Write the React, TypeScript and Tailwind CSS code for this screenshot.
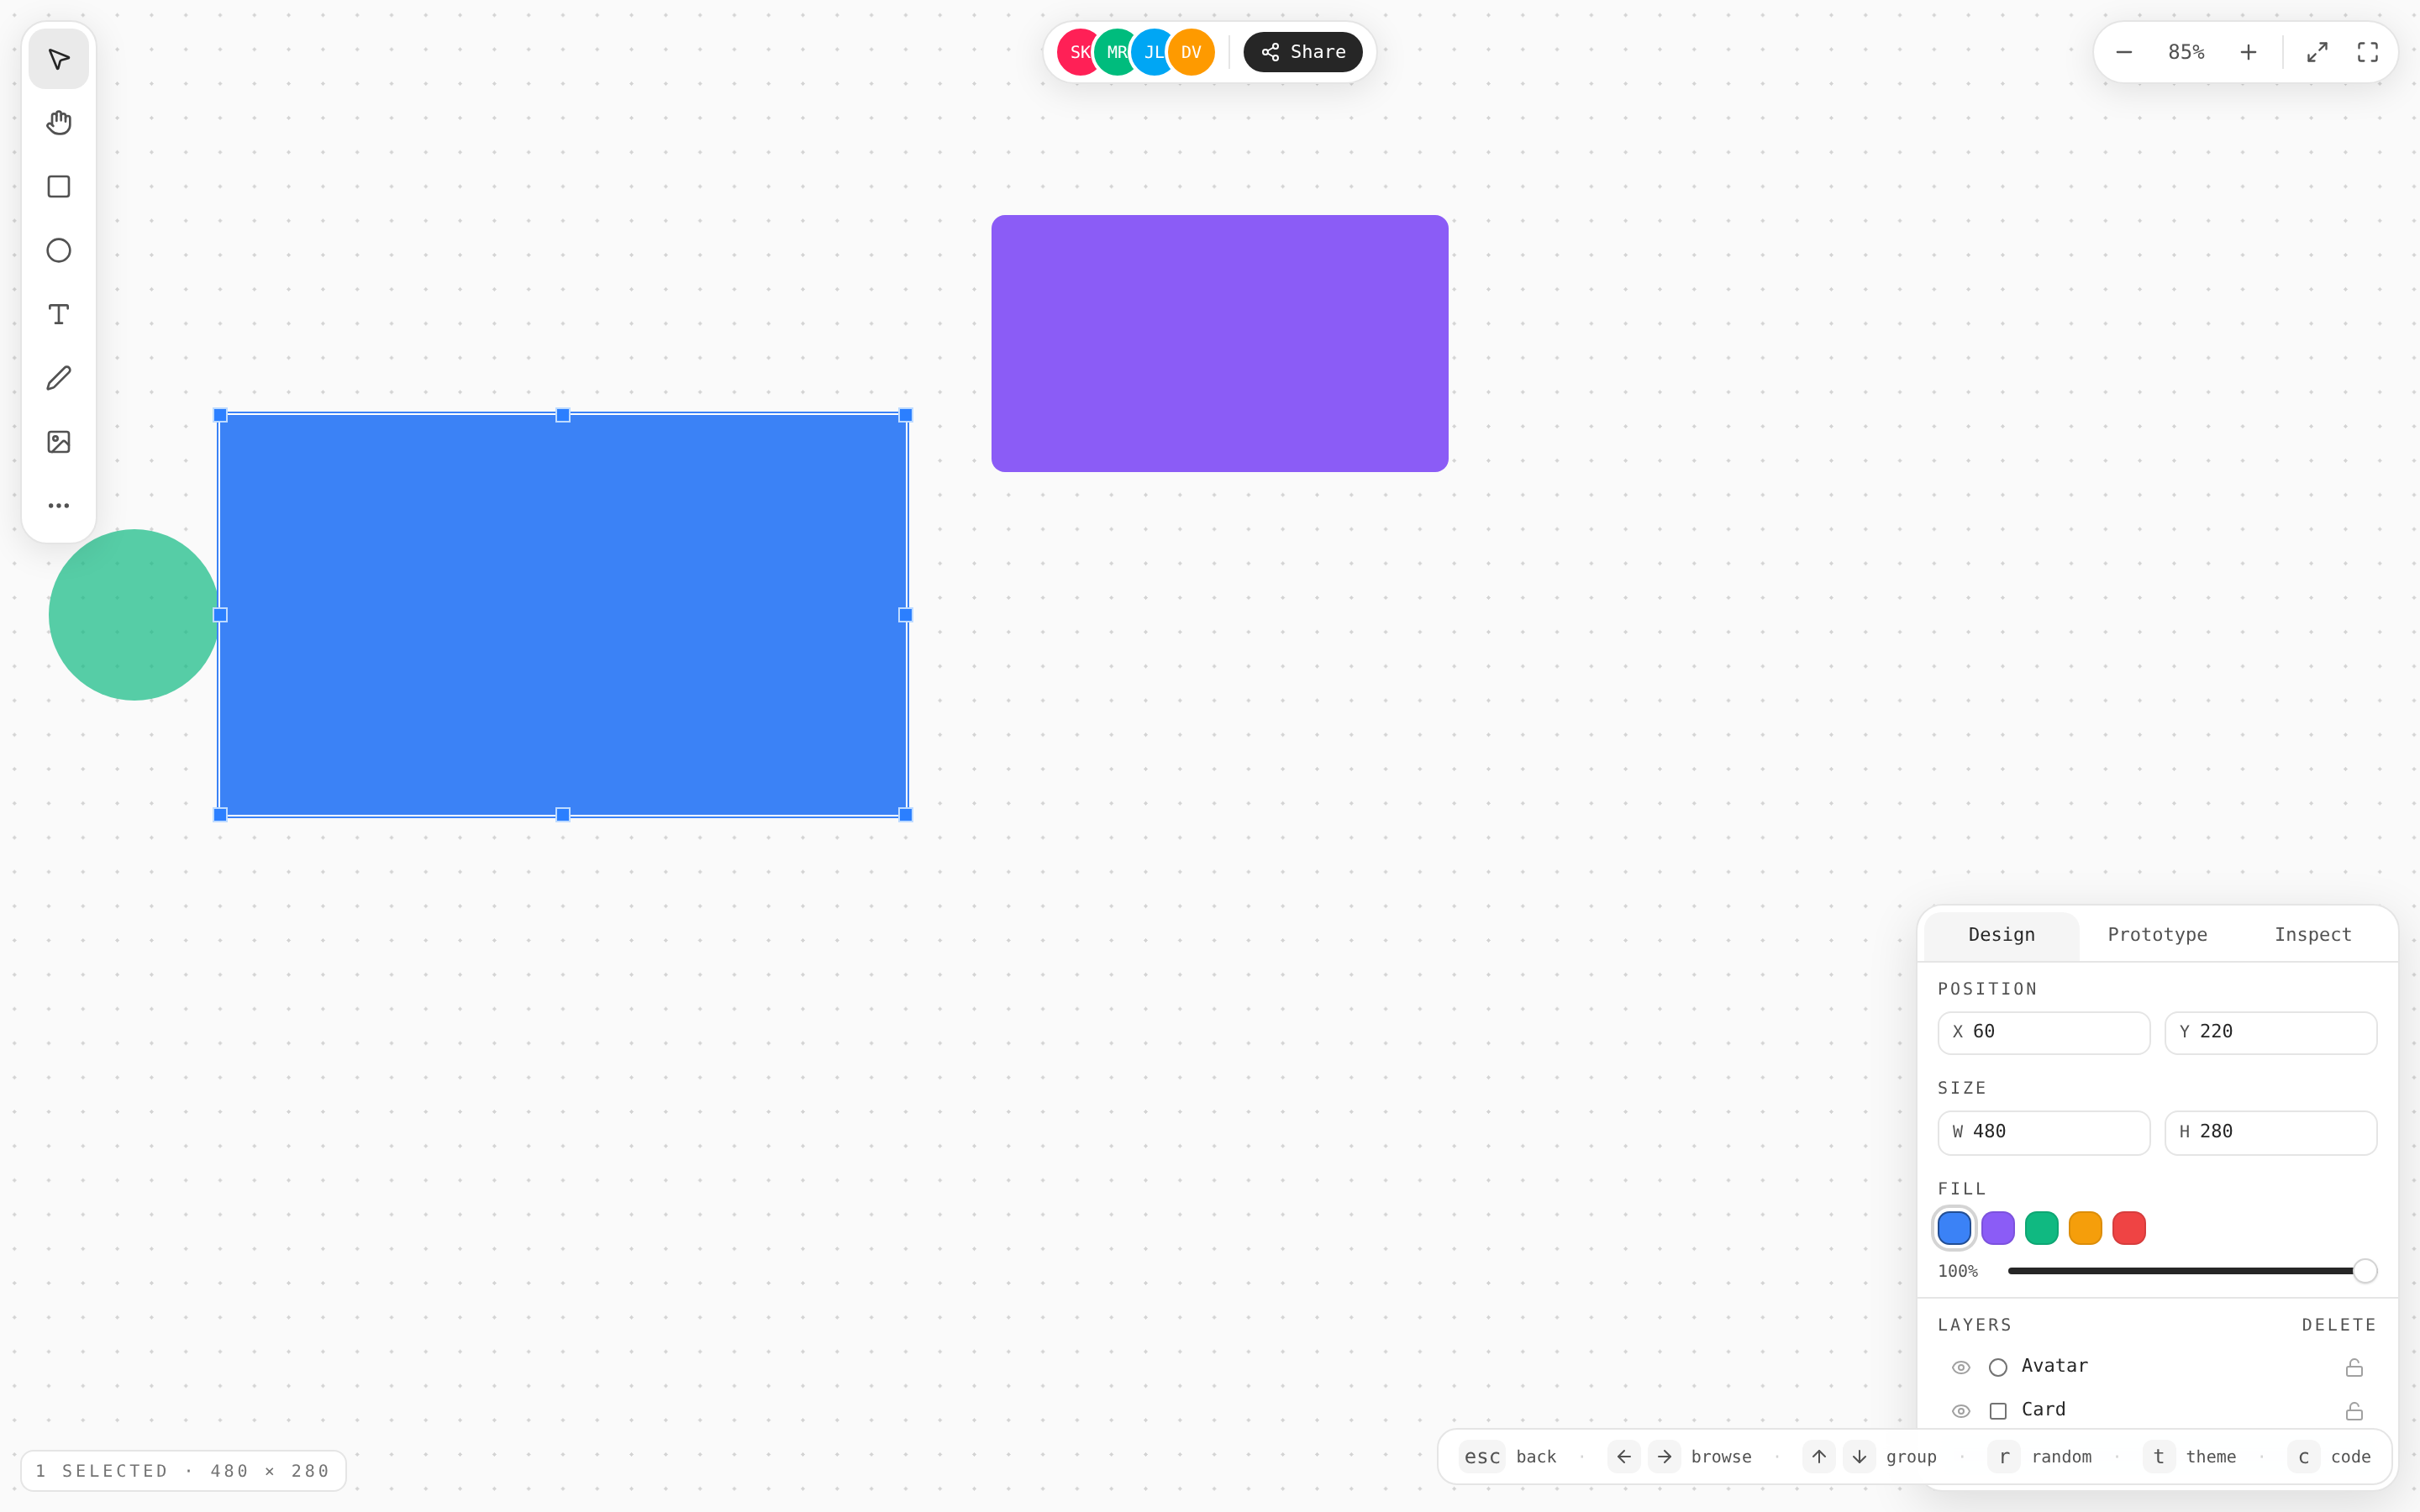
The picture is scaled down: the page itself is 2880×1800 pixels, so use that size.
import React from 'react';
import {
  ArrowDown,
  ArrowLeft,
  ArrowRight,
  ArrowUp,
  Circle,
  Ellipsis,
  Eye,
  Hand,
  Image,
  LockOpen,
  Maximize,
  Maximize2,
  Minus,
  MousePointer2,
  Pen,
  Plus,
  Share2,
  Square,
  Type,
} from 'lucide-react';

const tools = [MousePointer2, Hand, Square, Circle, Type, Pen, Image, Ellipsis];

const avatars = [
  { label: 'SK', color: 'bg-rose-500' },
  { label: 'MR', color: 'bg-emerald-500' },
  { label: 'JL', color: 'bg-sky-500' },
  { label: 'DV', color: 'bg-amber-500' },
];

const swatches = ['bg-[#8b5cf6]', 'bg-[#10b981]', 'bg-[#f59e0b]', 'bg-[#ef4444]'];

const Handle = ({ className }: { className: string }) => (
  <div className={`absolute w-[18px] h-[18px] -ml-[9px] -mt-[9px] bg-blue-500 border-2 border-blue-200 ${className}`} />
);

const Field = ({ label, value, height }: { label: string; value: string; height: string }) => (
  <div className={`flex items-center gap-3 px-4 pb-1 border-2 border-neutral-200 rounded-2xl ${height}`}>
    <span className="text-[20px] text-neutral-600">{label}</span>
    <span className="text-[22px] text-neutral-800">{value}</span>
  </div>
);

const Label = ({ children }: { children: React.ReactNode }) => (
  <div className="text-[20px] leading-[30px] tracking-[3px] text-neutral-600">{children}</div>
);

const LayerRow = ({ name, shape: Shape }: { name: string; shape: typeof Circle }) => (
  <div className="flex items-center h-12 px-4 text-neutral-500">
    <Eye size={24} className="text-neutral-400" />
    <Shape size={24} className="ml-5" />
    <span className="ml-4 pb-1 text-[22px] text-neutral-800">{name}</span>
    <LockOpen size={24} className="ml-auto text-neutral-400" />
  </div>
);

const Key = ({ children, wide }: { children: React.ReactNode; wide?: boolean }) => (
  <span className={`flex items-center justify-center h-10 rounded-xl bg-neutral-100 text-[24px] text-neutral-600 ${wide ? 'w-14' : 'w-10'}`}>
    {children}
  </span>
);

const Sep = () => <span className="text-neutral-300">·</span>;

export default function App() {
  return (
    <div className="relative w-full h-screen overflow-hidden bg-[#fafafa] bg-[radial-gradient(circle,#d4d4d4_2px,transparent_2px)] bg-[size:40.8px_40.8px] bg-[position:160px_120px] font-['DejaVu_Sans_Mono',monospace] [text-rendering:geometricPrecision]">
      {/* Canvas shapes */}
      <div className="absolute left-[58px] top-[630px] w-[204px] h-[204px] rounded-full bg-[#10b981] opacity-70" />
      <div className="absolute left-[1180px] top-[256px] w-[544px] h-[306px] rounded-2xl bg-[#8b5cf6]" />
      <div className="absolute left-[262px] top-[494px] w-[816px] h-[476px] bg-[#3b82f6] shadow-[0_0_0_2px_#fff,0_0_0_4px_#3b82f6]">
        <Handle className="left-0 top-0" />
        <Handle className="left-1/2 top-0" />
        <Handle className="left-full top-0" />
        <Handle className="left-0 top-1/2" />
        <Handle className="left-full top-1/2" />
        <Handle className="left-0 top-full" />
        <Handle className="left-1/2 top-full" />
        <Handle className="left-full top-full" />
      </div>

      {/* Tool rail */}
      <div className="absolute left-6 top-6 flex flex-col gap-1 p-2 bg-white border-2 border-neutral-200 rounded-[32px] shadow-[0_8px_40px_rgba(0,0,0,0.1)]">
        {tools.map((Icon, i) => (
          <button
            key={i}
            className={`flex items-center justify-center w-[72px] h-[72px] rounded-[20px] ${
              i === 0 ? 'bg-neutral-200/80 text-neutral-800' : 'text-neutral-600'
            }`}
          >
            <Icon size={32} />
          </button>
        ))}
      </div>

      {/* Collaborators */}
      <div className="absolute left-[1240px] top-6 flex items-center h-[76px] pl-3 pr-4 bg-white border-2 border-neutral-200 rounded-full shadow-[0_8px_40px_rgba(0,0,0,0.1)] will-change-transform">
        <div className="flex">
          {avatars.map((a, i) => (
            <div
              key={a.label}
              className={`flex items-center justify-center w-16 h-16 rounded-full border-4 border-white text-[20px] text-white ${a.color} ${i > 0 ? '-ml-5' : ''}`}
            >
              {a.label}
            </div>
          ))}
        </div>
        <div className="w-0.5 h-10 ml-3 bg-neutral-200" />
        <button className="flex items-center gap-3 h-12 ml-4 px-5 rounded-full bg-neutral-800 text-white text-[22px]">
          <Share2 size={24} />
          <span className="pb-0.5">Share</span>
        </button>
      </div>

      {/* Zoom controls */}
      <div className="absolute right-6 top-6 flex items-center h-[76px] px-2 bg-white border-2 border-neutral-200 rounded-full shadow-[0_8px_40px_rgba(0,0,0,0.1)] text-neutral-600 will-change-transform">
        <button className="flex items-center justify-center w-14 h-14"><Minus size={28} /></button>
        <span className="w-[92px] text-center text-[24px]">85%</span>
        <button className="flex items-center justify-center w-14 h-14"><Plus size={28} /></button>
        <div className="w-0.5 h-10 mx-3 bg-neutral-200" />
        <button className="flex items-center justify-center w-14 h-14"><Maximize2 size={28} /></button>
        <button className="flex items-center justify-center w-14 h-14 ml-1"><Maximize size={28} /></button>
      </div>

      {/* Properties panel */}
      <div className="absolute right-6 bottom-6 flex flex-col w-[576px] h-[700px] overflow-hidden bg-white border-2 border-neutral-200 rounded-[32px] shadow-[0_16px_60px_rgba(0,0,0,0.12)] will-change-transform">
        <div className="grid grid-cols-3 px-2 pt-2 border-b-2 border-neutral-200 text-[22px] text-neutral-600">
          <div className="flex items-center justify-center h-[58px] pb-1 rounded-t-[20px] bg-neutral-100 text-neutral-800">Design</div>
          <div className="flex items-center justify-center h-[58px] pb-1">Prototype</div>
          <div className="flex items-center justify-center h-[58px] pb-1">Inspect</div>
        </div>

        <div className="px-6 pt-4 pb-4 border-b-2 border-neutral-200">
          <Label>POSITION</Label>
          <div className="grid grid-cols-2 gap-4 mt-3">
            <Field label="X" value="60" height="h-[52px]" />
            <Field label="Y" value="220" height="h-[52px]" />
          </div>
          <div className="mt-6"><Label>SIZE</Label></div>
          <div className="grid grid-cols-2 gap-4 mt-3">
            <Field label="W" value="480" height="h-[54px]" />
            <Field label="H" value="280" height="h-[54px]" />
          </div>
          <div className="mt-6"><Label>FILL</Label></div>
          <div className="flex gap-3 mt-3">
            <div className="w-10 h-10 rounded-[14px] bg-[#3b82f6] border-2 border-black/40 outline-4 outline-offset-4 outline-neutral-300" />
            {swatches.map((s) => (
              <div key={s} className={`w-10 h-10 rounded-[14px] border-2 border-black/10 ${s}`} />
            ))}
          </div>
          <div className="flex items-center mt-4 h-[30px]">
            <span className="w-[84px] text-[20px] text-neutral-600">100%</span>
            <div className="relative flex-1 h-2 rounded-full bg-neutral-800">
              <div className="absolute right-0 -top-[11px] w-[30px] h-[30px] rounded-full bg-white border-2 border-neutral-300 shadow-sm" />
            </div>
          </div>
        </div>

        <div className="px-6 pt-4">
          <div className="flex justify-between">
            <Label>LAYERS</Label>
            <Label>DELETE</Label>
          </div>
          <div className="flex flex-col gap-1 mt-3">
            <LayerRow name="Avatar" shape={Circle} />
            <LayerRow name="Card" shape={Square} />
            <div className="h-12 rounded-xl bg-blue-50" />
          </div>
        </div>
      </div>

      {/* Selection status */}
      <div className="absolute left-6 bottom-6 flex items-center h-[50px] px-4 bg-white border-2 border-neutral-200 rounded-2xl text-[20px] tracking-[4px] text-neutral-500 will-change-transform">
        1 SELECTED · 480 × 280
      </div>

      {/* Keyboard hints */}
      <div className="absolute right-8 bottom-8 flex items-center gap-6 h-[68px] px-6 bg-white/90 backdrop-blur-md border-2 border-neutral-200 rounded-3xl text-[20px] text-neutral-600">
        <span className="flex items-center gap-3"><Key wide>esc</Key>back</span>
        <Sep />
        <span className="flex items-center gap-3">
          <span className="flex gap-2"><Key><ArrowLeft size={24} /></Key><Key><ArrowRight size={24} /></Key></span>
          browse
        </span>
        <Sep />
        <span className="flex items-center gap-3">
          <span className="flex gap-2"><Key><ArrowUp size={24} /></Key><Key><ArrowDown size={24} /></Key></span>
          group
        </span>
        <Sep />
        <span className="flex items-center gap-3"><Key>r</Key>random</span>
        <Sep />
        <span className="flex items-center gap-3"><Key>t</Key>theme</span>
        <Sep />
        <span className="flex items-center gap-3"><Key>c</Key>code</span>
      </div>
    </div>
  );
}
